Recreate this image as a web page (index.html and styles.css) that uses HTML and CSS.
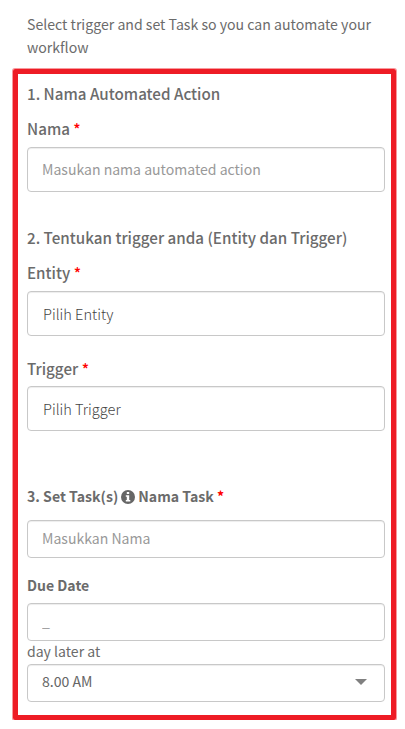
FILE: index.html
```html
<!DOCTYPE html>
<html lang="id">
<head>
    <meta charset="utf-8">
    <title>Automated Action</title>
    <link rel="stylesheet" href="styles.css">
</head>
<body>
    <p class="intro">Select trigger and set Task so you can automate your workflow</p>

    <form class="action-form">
        <section class="section">
            <h2 class="section-title">1. Nama Automated Action</h2>
            <label class="label" for="nama">Nama <span class="required">*</span></label>
            <input class="field" id="nama" type="text" placeholder="Masukan nama automated action">
        </section>

        <section class="section">
            <h2 class="section-title">2. Tentukan trigger anda (Entity dan Trigger)</h2>
            <label class="label" for="entity">Entity <span class="required">*</span></label>
            <input class="field field-picker" id="entity" type="text" value="Pilih Entity" readonly>
            <label class="label label-trigger" for="trigger">Trigger <span class="required">*</span></label>
            <input class="field field-picker" id="trigger" type="text" value="Pilih Trigger" readonly>
        </section>

        <section class="section section-task">
            <label class="label label-task" for="task">
                <span>3. Set Task(s)</span>
                <svg class="info-icon" viewBox="0 0 14 14">
                    <circle cx="7" cy="7" r="7" fill="#666"/>
                    <path d="M5.8 2h2.4v2H5.8zM4.8 5.2h3.4v4.7h1.1v1.6H4.8V9.9h1V6.8h-1z" fill="#fff"/>
                </svg>
                <span>Nama Task <span class="required">*</span></span>
            </label>
            <input class="field field-small" id="task" type="text" placeholder="Masukkan Nama">
            <label class="label label-due" for="due">Due Date</label>
            <input class="field field-small" id="due" type="text" placeholder="_">
            <p class="due-text">day later at</p>
            <div class="field field-small select">
                <span>8.00 AM</span>
                <svg class="caret" viewBox="0 0 12 6"><path d="M0 0h12L6 6z" fill="#808080"/></svg>
            </div>
        </section>
    </form>
</body>
</html>
```

FILE: styles.css
```css
* {
    box-sizing: border-box;
}
body {
    margin: 0;
    background: #fff;
    color: #6b6b6b;
    font-family: "Noto Sans CJK SC", "Noto Sans", sans-serif;
    font-size: 14.05px;
    line-height: 23px;
}
.intro {
    margin: 0;
    padding: 13px 20px 10px 27px;
    font-size: 14.12px;
}
.action-form {
    width: 383px;
    height: 651px;
    margin-left: 13px;
    padding: 8px 7px 0 9px;
    border: 5px solid #ee1c25;
    border-radius: 2px;
    box-shadow: 0 0 0 1px rgba(238, 28, 37, 0.45);
}
.section {
    display: flex;
    flex-direction: column;
    margin-bottom: 35px;
}
.section-title {
    margin: 0 0 12px;
    font-size: 15.2px;
    font-weight: 500;
}
.label {
    margin-bottom: 7px;
    font-size: 15.2px;
    font-weight: 500;
}
.section + .section {
    margin-top: -1px;
}
.label-trigger {
    margin: 21px 0 6px;
}
.section + .section-task {
    margin-top: 54px;
}
.label-task {
    display: flex;
    align-items: center;
    gap: 3px;
    margin-bottom: 12px;
    font-size: 14.1px;
    font-weight: 700;
}
.label-due {
    margin: 16px 0 6px;
    font-size: 14.05px;
    font-weight: 700;
}
.required {
    color: #f00;
}
.field {
    width: 358px;
    height: 45px;
    padding: 0 14px 2px;
    border: 1px solid #c8c8c8;
    border-radius: 4px;
    outline: none;
    background: #fff;
    box-shadow: inset 0 1px 1px rgba(0, 0, 0, 0.075);
    color: #666;
    font: inherit;
}
.field::placeholder {
    color: #999;
    opacity: 1;
}
.field-picker {
    padding: 0 15px;
    color: #444;
    font-size: 14.6px;
    font-weight: 300;
}
.field-small {
    height: 38px;
}
.due-text {
    margin: -1px 0 1px;
}
.select {
    display: flex;
    align-items: center;
    justify-content: space-between;
    padding: 0 17px 3px 14px;
}
.info-icon {
    width: 14px;
    height: 14px;
}
.caret {
    width: 12px;
    height: 6px;
}
```
